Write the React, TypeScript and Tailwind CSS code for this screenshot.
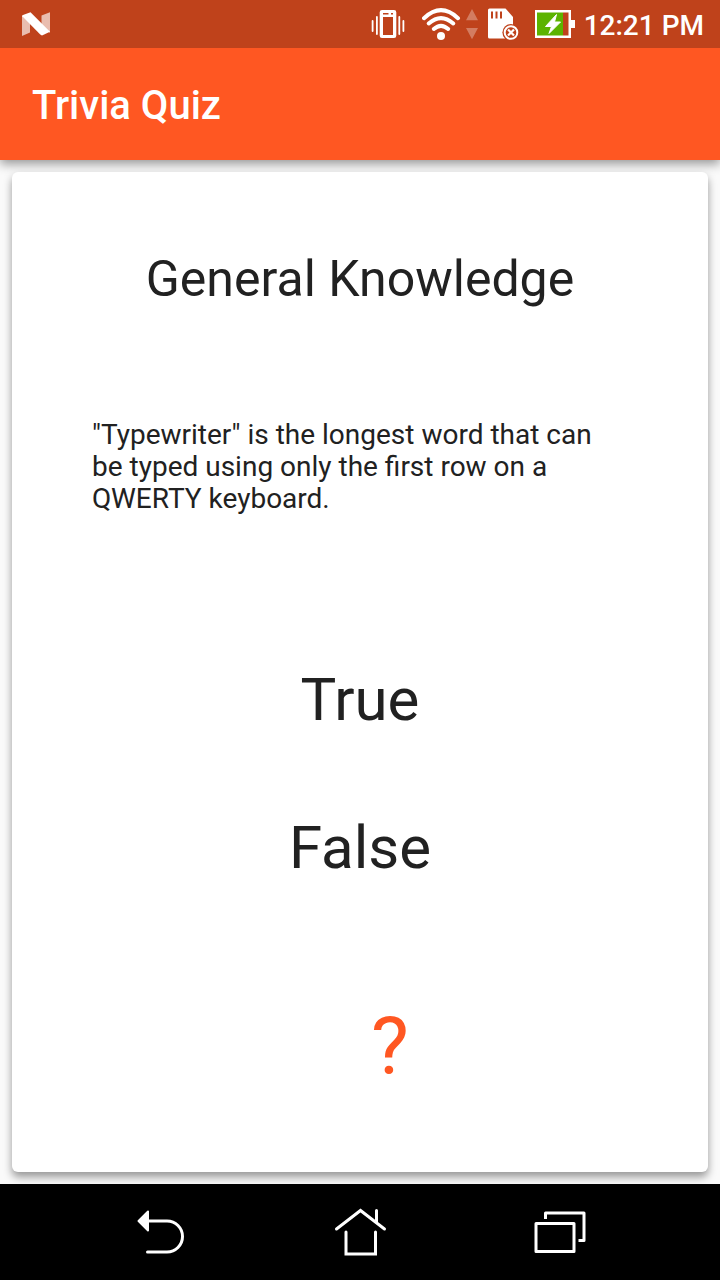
function StatusBar() {
  return (
    <div className="relative z-10 flex h-12 items-center bg-[#bf421b] pr-4 pl-5 text-white">
      <svg className="h-12 w-8" viewBox="20 0 32 48" fill="currentColor" role="img" aria-label="Android N">
        <path d="M22 15.500v20.500l8-3.500V20zM50 33V12.300l-8.500 3.200V25z" opacity=".65" />
        <path d="M22.300 15.300 30.500 12.200 50 31.800 42 35.600Q41 35.200 40 34.300L22.300 16.300z" />
      </svg>
      <div className="ml-auto flex items-center">
        <svg className="h-12 w-9" viewBox="370 0 36 48" fill="none" stroke="currentColor" role="img" aria-label="Vibrate">
          <path
            d="M382 10h12q2.300 0 2.300 2.300v23.400q0 2.300-2.300 2.300h-12q-2.300 0-2.300-2.300V12.300q0-2.300 2.300-2.300zM383 17v18h10V17z"
            fill="currentColor"
            fillRule="evenodd"
            stroke="none"
          />
          <path d="M383 13.700h5.500M391 13.700h2" stroke="#bf421b" strokeWidth="1.600" />
          <path d="M372.600 21v10M403.400 21v10M376.900 17v17M399.300 17v17" strokeWidth="1.800" strokeLinecap="round" />
        </svg>
        <svg className="ml-4 h-12 w-10" viewBox="422 0 40 48" fill="none" stroke="currentColor" strokeWidth="4" role="img" aria-label="Wi-Fi">
          <path d="M424 18.200Q441 2.200 458 18.200" strokeLinecap="round" />
          <path d="M428.700 23.500Q441 12.600 453.300 23.500M433.800 29Q441 22.600 448.200 29" strokeLinecap="round" />
          <circle cx="441" cy="36" r="4" fill="currentColor" stroke="none" />
        </svg>
        <svg className="ml-0.5 h-12 w-4" viewBox="464 0 16 48" fill="#d37c61" aria-hidden="true">
          <path d="M472 9l6 11.300h-12zM472 39.200l-6-11.300h12z" />
        </svg>
        <svg className="ml-2 h-12 w-8" viewBox="488 0 32 48" role="img" aria-label="Memory card removed">
          <path d="M489.500 8.500H505.500L513 17v21.500h-23.500q-1.500 0-1.500-1.500V10q0-1.500 1.500-1.500z" fill="currentColor" />
          <path d="M492 11.500v7M496.500 11.500v7M501 11.500v7" stroke="#bf421b" strokeWidth="2" />
          <circle cx="511" cy="32.500" r="8.600" fill="#bf421b" />
          <circle cx="511" cy="32.500" r="6.300" fill="#bf421b" stroke="currentColor" strokeWidth="2" />
          <path d="M508 29.500l6 6M514 29.500l-6 6" stroke="currentColor" strokeWidth="2.200" />
        </svg>
        <svg className="ml-3 h-12 w-11" viewBox="532 0 44 48" role="img" aria-label="Battery charging">
          <path d="M535 10h36v10h4v8h-4v10h-36z" fill="currentColor" />
          <path d="M537 12.500h26v23h-26z" fill="#5cb300" />
          <path d="M563 12.500h5.500v23H563z" fill="#bf421b" />
          <path d="M556.500 14.500 545.500 26.500h6L549 33.500 560.500 22h-6z" fill="currentColor" stroke="currentColor" strokeLinejoin="round" />
        </svg>
        <time className="ml-2 pt-1 text-[28px] leading-8 font-medium">12:21 PM</time>
      </div>
    </div>
  );
}

function NavigationBar() {
  return (
    <nav className="relative flex h-24 items-center justify-center gap-[120px] bg-black text-white">
      <button type="button" aria-label="Back">
        <svg className="h-20 w-20" viewBox="120 1192 80 80" fill="none" stroke="currentColor" strokeWidth="3" strokeLinecap="round">
          <path d="M147 1221h20a15.500 15.500 0 0 1 0 31H147.500" />
          <path d="M148 1211.500v19l-9.500-9.500z" fill="currentColor" strokeWidth="2" strokeLinejoin="round" />
        </svg>
      </button>
      <button type="button" aria-label="Home">
        <svg className="h-20 w-20" viewBox="320 1192 80 80" fill="none" stroke="currentColor" strokeWidth="3" strokeLinecap="round">
          <path d="M336.500 1229 360.500 1210.500 384.500 1229M376.500 1210.500v12M346 1232v22h29.500v-22" />
        </svg>
      </button>
      <button type="button" aria-label="Recent apps">
        <svg className="h-20 w-20" viewBox="520 1192 80 80" fill="none" stroke="currentColor" strokeWidth="3">
          <path d="M536 1223.500h38v28h-38zM545.500 1219v-6h38.500v27.500h-5.500" strokeLinejoin="round" />
        </svg>
      </button>
    </nav>
  );
}

export default function App() {
  return (
    <div className="flex min-h-screen flex-col bg-[#fafafa] font-['Roboto',sans-serif] text-[#212121]">
      <StatusBar />
      <header className="flex h-28 items-center bg-[#ff5722] px-8 pt-1 shadow-[0_4px_10px_rgba(0,0,0,0.4)]">
        <h1 className="text-[40px] leading-12 font-medium text-white">Trivia Quiz</h1>
      </header>
      <main className="flex grow flex-col p-3">
        <section className="flex grow flex-col items-center rounded-md bg-white pt-[77px] shadow-[0_5px_8px_rgba(0,0,0,0.4)]">
          <h2 className="text-[50px] leading-[60px]">General Knowledge</h2>
          <p className="mt-[110px] w-full px-20 text-[28px] leading-8">
            "Typewriter" is the longest word that can be typed using only the first row on a QWERTY keyboard.
          </p>
          <button type="button" className="mt-[149px] text-[60px] leading-[72px]">
            True
          </button>
          <button type="button" className="mt-[76px] text-[60px] leading-[72px]">
            False
          </button>
          <output className="mt-[115px] ml-[60px] text-[80px] leading-[96px] text-[#ff5722]">?</output>
        </section>
      </main>
      <NavigationBar />
    </div>
  );
}
